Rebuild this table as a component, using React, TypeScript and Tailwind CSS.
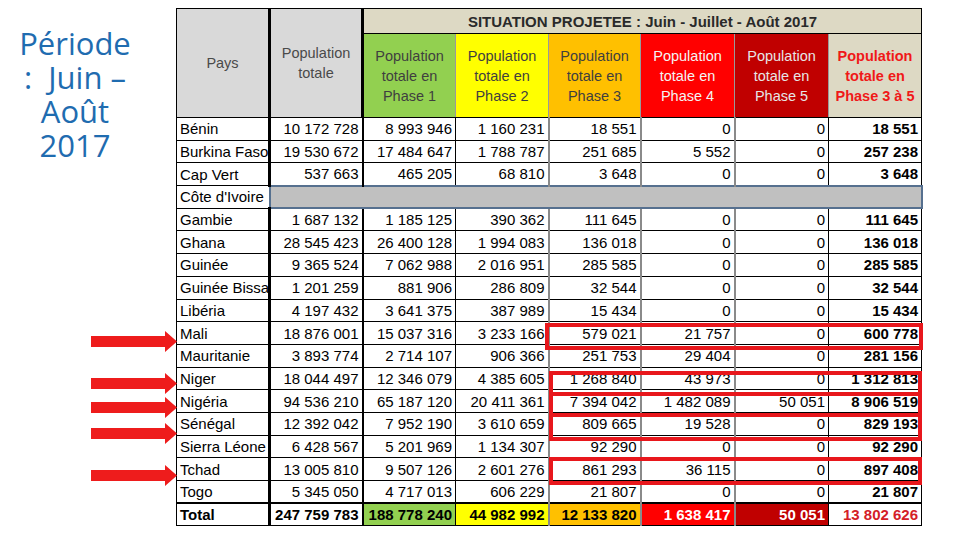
import React from 'react';

type Row = { pays: string; values?: string[] };

const rows: Row[] = [
  { pays: 'Bénin', values: ['10 172 728', '8 993 946', '1 160 231', '18 551', '0', '0', '18 551'] },
  { pays: 'Burkina Faso', values: ['19 530 672', '17 484 647', '1 788 787', '251 685', '5 552', '0', '257 238'] },
  { pays: 'Cap Vert', values: ['537 663', '465 205', '68 810', '3 648', '0', '0', '3 648'] },
  { pays: "Côte d'Ivoire" },
  { pays: 'Gambie', values: ['1 687 132', '1 185 125', '390 362', '111 645', '0', '0', '111 645'] },
  { pays: 'Ghana', values: ['28 545 423', '26 400 128', '1 994 083', '136 018', '0', '0', '136 018'] },
  { pays: 'Guinée', values: ['9 365 524', '7 062 988', '2 016 951', '285 585', '0', '0', '285 585'] },
  { pays: 'Guinée Bissau', values: ['1 201 259', '881 906', '286 809', '32 544', '0', '0', '32 544'] },
  { pays: 'Libéria', values: ['4 197 432', '3 641 375', '387 989', '15 434', '0', '0', '15 434'] },
  { pays: 'Mali', values: ['18 876 001', '15 037 316', '3 233 166', '579 021', '21 757', '0', '600 778'] },
  { pays: 'Mauritanie', values: ['3 893 774', '2 714 107', '906 366', '251 753', '29 404', '0', '281 156'] },
  { pays: 'Niger', values: ['18 044 497', '12 346 079', '4 385 605', '1 268 840', '43 973', '0', '1 312 813'] },
  { pays: 'Nigéria', values: ['94 536 210', '65 187 120', '20 411 361', '7 394 042', '1 482 089', '50 051', '8 906 519'] },
  { pays: 'Sénégal', values: ['12 392 042', '7 952 190', '3 610 659', '809 665', '19 528', '0', '829 193'] },
  { pays: 'Sierra Léone', values: ['6 428 567', '5 201 969', '1 134 307', '92 290', '0', '0', '92 290'] },
  { pays: 'Tchad', values: ['13 005 810', '9 507 126', '2 601 276', '861 293', '36 115', '0', '897 408'] },
  { pays: 'Togo', values: ['5 345 050', '4 717 013', '606 229', '21 807', '0', '0', '21 807'] },
];

const totals = ['247 759 783', '188 778 240', '44 982 992', '12 133 820', '1 638 417', '50 051', '13 802 626'];

// left border per value column (index 0 = population totale)
const colBorder = [
  'border-l-[3px] border-l-black',
  'border-l-2 border-l-black',
  'border-l border-l-black',
  'border-l-2 border-l-[#8a8a8a]',
  'border-l-2 border-l-[#8a8a8a]',
  'border-l-2 border-l-[#8a8a8a]',
  'border-l border-l-black',
];

const phases = [
  { label: 'Phase 1', cls: 'bg-[#92d050] text-[#3f3f3f]' },
  { label: 'Phase 2', cls: 'bg-[#ffff00] text-[#3f3f3f]' },
  { label: 'Phase 3', cls: 'bg-[#ffc000] text-[#3f3f3f]' },
  { label: 'Phase 4', cls: 'bg-[#ff0000] text-[#f4f4f4]' },
  { label: 'Phase 5', cls: 'bg-[#c00000] text-[#e6e6e6]' },
  { label: 'Phase 3 à 5', cls: 'bg-[#ddd9c4] text-[#f01818] font-bold' },
];

const totalCls = [
  'bg-white text-black',
  'bg-[#92d050] text-black',
  'bg-[#ffff00] text-black',
  'bg-[#ffc000] text-black',
  'bg-[#ff0000] text-white',
  'bg-[#c00000] text-white',
  'bg-white text-[#d42027]',
];

// annotation boxes drawn over the table: [left, top, width, height]
const boxes = [
  [545, 323, 378, 27],
  [549, 371, 373, 25],
  [549, 392, 373, 25],
  [549, 413, 373, 28],
  [549, 457, 373, 28],
];

const arrows = [341, 383, 407, 433, 475];

function Arrow({ y }: { y: number }) {
  return (
    <svg className="absolute" style={{ left: 91, top: y - 10.5 }} width="86" height="21" viewBox="0 0 86 21">
      <polygon points="0,5 74,5 74,0 86,10.5 74,21 74,16 0,16" fill="#ee1c1c" />
    </svg>
  );
}

export default function App() {
  return (
    <div className="relative w-[960px] h-[540px] overflow-hidden bg-white flex font-['Liberation_Sans',Arial,sans-serif]">
      {/* Title */}
      <div className="w-[150px] pt-[26px] text-center text-[31px] leading-[34px] text-[#1f6cb0] font-['Open_Sans',sans-serif]">
        <div>Période</div>
        <div className="whitespace-pre">{':  Juin –'}</div>
        <div>Août</div>
        <div>2017</div>
      </div>

      {/* Table */}
      <div className="ml-[26px] pt-[8px]">
        <table className="w-[745px] table-fixed border-collapse text-[15px] leading-none text-black">
          <colgroup>
            <col className="w-[93px]" />
            <col className="w-[93px]" />
            <col className="w-[93px]" />
            <col className="w-[93px]" />
            <col className="w-[92px]" />
            <col className="w-[94px]" />
            <col className="w-[94px]" />
            <col className="w-[93px]" />
          </colgroup>
          <thead>
            <tr className="h-[25px]">
              <th rowSpan={2} className="border border-black bg-[#d9d9d9] font-normal text-[14.5px] text-[#4a4a4a] align-middle">
                Pays
              </th>
              <th rowSpan={2} className="border border-black border-l-[3px] bg-[#d9d9d9] font-normal text-[14.5px] leading-[20px] text-[#4a4a4a] align-middle">
                Population
                <br />
                totale
              </th>
              <th colSpan={6} className="border border-black border-l-[3px] bg-[#ddd9c4] font-bold text-[15px] text-[#2a2a2a] align-middle whitespace-nowrap">
                SITUATION PROJETEE : Juin - Juillet - Août 2017
              </th>
            </tr>
            <tr className="h-[84px]">
              {phases.map((p, i) => (
                <th
                  key={p.label}
                  className={`border-b border-b-black border-t border-t-black border-l border-l-[#9a9a9a] ${
                    i === 0 ? 'border-l-[3px] border-l-black' : ''
                  } ${i === 5 ? 'border-r border-r-black' : ''} text-[14.5px] leading-[20px] align-middle ${
                    i === 5 ? '' : 'font-normal'
                  } ${p.cls}`}
                >
                  Population
                  <br />
                  totale en
                  <br />
                  {p.label}
                </th>
              ))}
            </tr>
          </thead>
          <tbody>
            {rows.map((r) => (
              <tr key={r.pays} className="h-[22.7px]">
                <td className="border border-black px-[3px] whitespace-nowrap overflow-hidden text-left">{r.pays}</td>
                {r.values ? (
                  r.values.map((v, i) => (
                    <td
                      key={i}
                      className={`border-y border-y-black ${colBorder[i]} ${
                        i === 6 ? 'border-r border-r-black font-bold' : ''
                      } px-[3px] text-right whitespace-nowrap`}
                    >
                      {v}
                    </td>
                  ))
                ) : (
                  <td colSpan={7} className="border-2 border-[#56708f] bg-[#c0c0c0]" />
                )}
              </tr>
            ))}
            <tr className="h-[22.7px] font-bold">
              <td className="border border-black border-t-2 px-[3px] text-left">Total</td>
              {totals.map((v, i) => (
                <td
                  key={i}
                  className={`border-t-2 border-t-black border-b border-b-black ${colBorder[i]} ${
                    i === 6 ? 'border-r border-r-black' : ''
                  } px-[3px] text-right whitespace-nowrap ${totalCls[i]}`}
                >
                  {v}
                </td>
              ))}
            </tr>
          </tbody>
        </table>
      </div>

      {/* Annotations */}
      {boxes.map(([l, t, w, h], i) => (
        <div
          key={i}
          className="absolute border-[4px] border-[#e8171c] pointer-events-none"
          style={{ left: l, top: t, width: w, height: h }}
        />
      ))}
      {arrows.map((y) => (
        <Arrow key={y} y={y} />
      ))}
    </div>
  );
}
